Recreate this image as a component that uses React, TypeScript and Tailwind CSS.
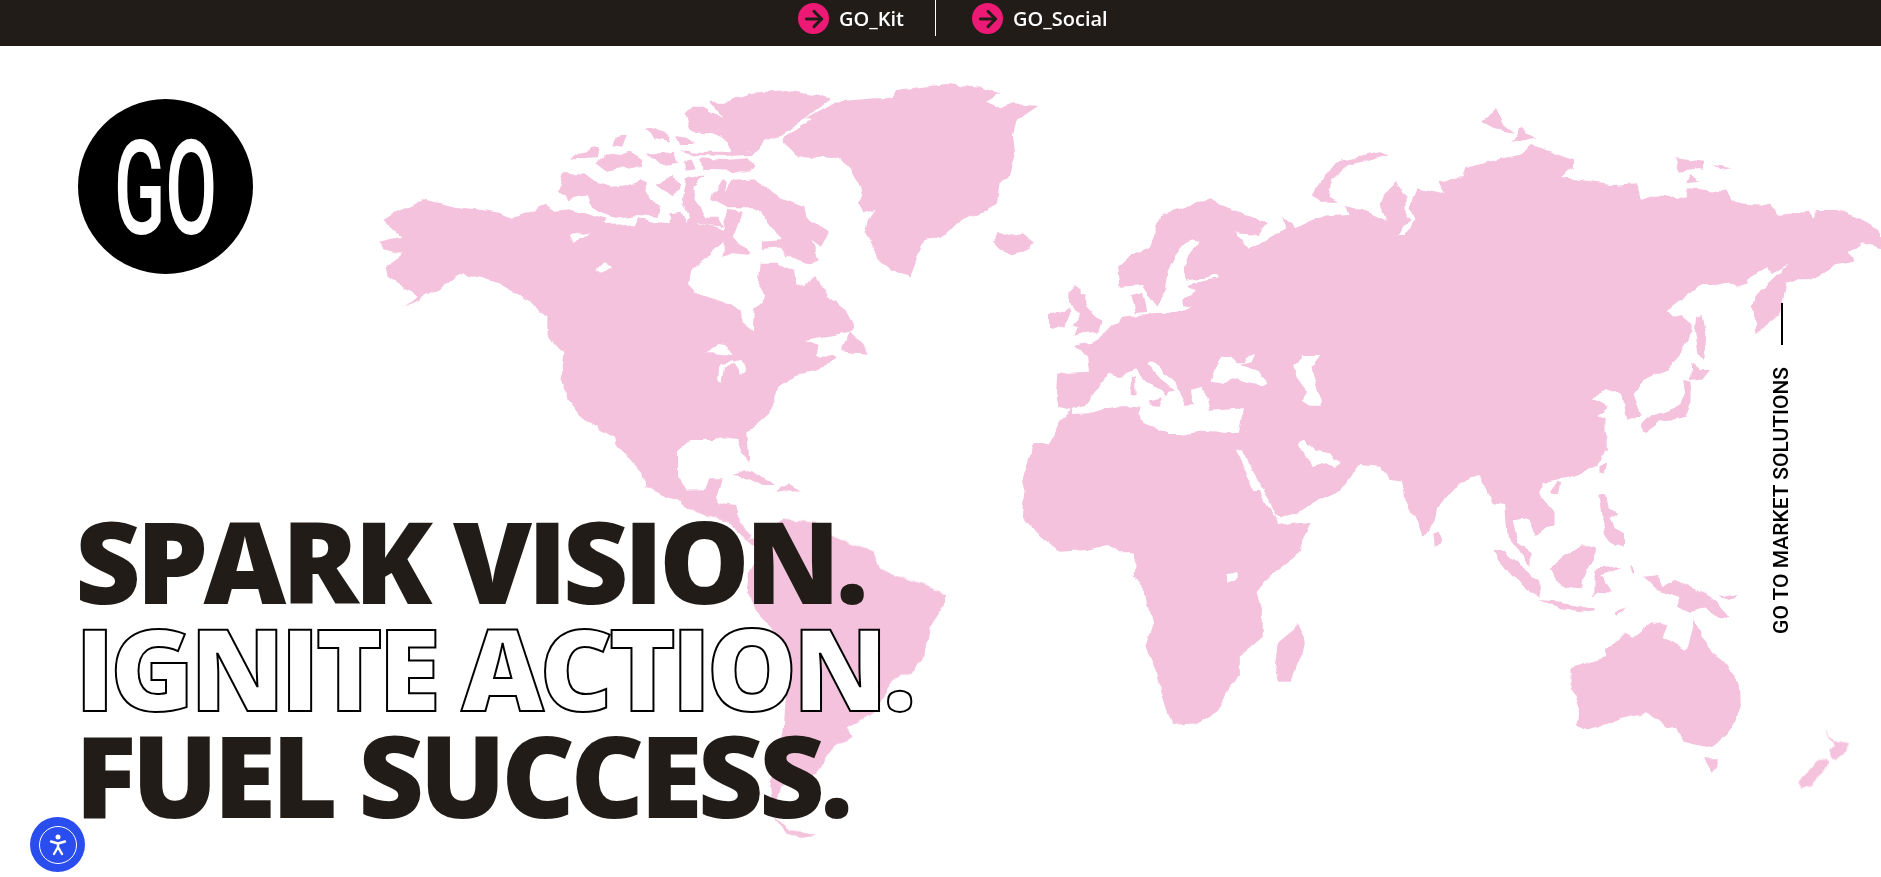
import { ArrowRight } from "lucide-react";

const PINK = "#f4c2dd";

// each group keeps the coordinates it was traced in
const NORTH = "translate(370 70) scale(0.4464 0.3333)";
const EURASIA = "translate(1000 90) scale(0.5618 0.3333)";
const SOUTH = "translate(1000 450) scale(0.5102 0.3333)";
const EUROPE = "translate(1040 250) scale(0.3333)";
const LATAM = "translate(640 480) scale(0.3333)";
const NZ = "translate(1780 710) scale(0.3333)";

const northLand = [
  "30,450 60,425 95,405 125,390 160,400 190,410 250,420 290,428 320,443 360,425 395,405 415,425 450,420 490,432 530,450 525,462 570,460 590,470 600,445 640,460 670,462 680,430 700,440 705,470 720,440 740,460 775,470 790,480 800,420 835,425 815,500 850,555 810,550 790,560 790,515 750,565 720,600 715,640 740,675 780,690 830,715 835,760 860,785 862,715 885,685 870,650 875,578 915,578 950,605 955,640 975,655 1000,618 1030,690 1065,720 1085,770 1075,785 975,810 1005,825 1000,855 1040,858 1045,870 990,905 950,915 915,950 895,1030 870,1060 845,1085 850,1175 835,1150 825,1110 790,1105 770,1110 720,1110 690,1140 690,1220 710,1265 750,1265 760,1225 790,1225 775,1300 825,1305 825,1350 795,1350 740,1310 700,1300 615,1250 610,1210 530,1090 480,1050 445,990 430,920 435,850 395,790 395,745 365,700 330,670 290,640 210,610 170,640 155,660 70,715 110,680 75,650 40,620 35,590 75,550 30,535 20,515 70,500",
  "765,380 790,325 800,330 795,360 810,330 860,325 895,355 920,385 970,410 975,440 1030,485 1010,530 990,510 1000,550 1005,575 980,580 930,560 920,535 880,540 880,515 920,510 905,480 880,440 870,415 800,415 765,390",
  "420,365 435,310 480,310 510,340 540,350 580,345 600,330 620,340 620,380 650,410 645,440 600,435 540,445 500,410 490,375 445,390",
  "640,345 680,315 695,345 680,380 660,365",
  "710,320 750,320 725,350 725,390 755,440 780,440 790,470 760,465 720,450 700,400",
  "670,430 700,425 715,470 680,465",
  "450,265 500,230 515,235 510,265 460,268",
  "540,225 560,195 575,195 565,230",
  "505,280 530,250 560,255 580,245 610,270 610,285 530,305",
  "615,180 640,175 670,200 670,215 640,205",
  "685,195 710,200 725,225 695,225",
  "620,250 650,250 680,245 690,285 660,290",
  "700,280 720,265 730,295 705,300",
  "740,265 790,270 850,265 860,290 850,305 770,300 745,300",
  "695,240 730,245 790,245 870,240 860,255 790,258 730,255",
  "705,130 720,110 745,110 790,145 760,95 800,95 850,70 930,60 1035,85 1000,115 950,170 920,200 880,215 870,240 810,245 800,215 770,195 730,190 710,165",
  "925,205 990,150 975,145 1040,95 1130,85 1170,85 1180,60 1290,42 1370,50 1415,70 1380,95 1410,115 1440,100 1500,105 1450,150 1440,190 1445,250 1430,320 1410,340 1405,400 1380,425 1320,455 1290,490 1240,515 1225,565 1210,622 1170,605 1140,570 1110,480 1130,420 1105,430 1095,400 1105,380 1095,340 1080,300 1055,263 990,263 960,260 925,215",
  "1392,510 1405,490 1430,500 1465,490 1490,515 1475,540 1440,555 1410,535",
  "1055,840 1075,785 1100,810 1115,855",
  "810,1215 840,1200 880,1220 910,1245 880,1245 850,1225",
  "910,1270 935,1242 965,1265 930,1265",
];

const northWater = [
  "445,495 470,490 490,495 465,505 455,520",
  "510,600 525,580 545,590 530,600 515,608",
  "750,850 780,825 800,830 810,855 770,850",
  "785,880 830,870 840,905 830,910 815,880 795,890 790,935 782,930",
  "530,1090 545,1100 575,1190 570,1205 530,1140",
  "350,730 362,720 372,765 355,760",
];

const eurasiaLand = [
  "210,530 230,500 265,470 285,375 330,350 375,325 400,350 440,375 475,405 460,435 420,430 445,480 470,450 490,430 510,415 500,385 520,395 525,415 570,380 620,375 615,345 660,370 688,392 675,340 705,275 722,320 722,380 730,395 705,435 720,435 738,390 728,350 742,295 790,315 780,270 825,265 830,235 880,210 925,195 945,165 1020,210 1020,235 995,260 1010,265 1020,270 1090,285 1130,280 1140,330 1160,320 1220,320 1225,295 1290,305 1310,340 1370,345 1385,375 1440,365 1445,385 1455,360 1490,360 1530,385 1568,420 1568,475 1536,460 1507,480 1522,515 1489,525 1453,565 1418,565 1400,575 1394,630 1385,670 1347,730 1338,650 1347,610 1406,520 1376,550 1364,535 1332,565 1332,580 1311,590 1293,575 1270,585 1246,585 1187,660 1198,680 1213,675 1231,700 1231,720 1213,790 1187,840 1145,870 1127,910 1142,975 1115,990 1106,920 1095,910 1080,900 1050,925 1086,950 1062,980 1080,1040 1080,1080 560,1080 560,700 300,640 280,650 255,585 215,590",
  "680,185 690,195 620,225 590,270 585,320 600,335 570,335 555,315 575,265 600,215",
  "885,60 895,100 915,125 880,115 858,95",
  "925,115 955,140 910,155",
  "1200,205 1255,215 1255,235 1210,245",
  "1270,225 1300,235 1280,240",
  "1225,255 1245,275 1220,280",
  "1239,680 1249,675 1258,760 1249,810 1243,790 1237,720",
  "1231,820 1246,840 1264,840 1252,865 1228,870",
  "1139,1005 1163,975 1187,965 1211,940 1219,900 1216,870 1231,875 1231,940 1222,980 1175,995 1148,1030",
];

const europeLand = [
  "250,200 340,190 430,180 600,100 960,100 960,640 900,720 0,720 0,597 30,580 45,545 60,510 95,480 55,470 48,430 52,370 150,365 145,320 105,285 150,275 180,262 215,225",
  "85,125 105,108 125,115 125,130 140,130 135,170 165,205 185,215 175,245 130,250 100,260 110,235 95,230 115,210 120,190 95,175 85,150",
  "30,195 85,172 92,185 75,225 30,238",
];

const europeWater = [
  "95,480 135,468 160,432 205,372 240,378 285,358 318,392 345,412 368,425 378,440 385,425 405,422 370,392 340,360 325,345 335,333 375,365 410,400 440,470 458,468 450,420 490,410 510,482 575,478 612,475 600,548 580,550 480,545 415,555 385,555 300,510 295,490 305,470 250,465 145,490 100,492",
  "515,395 525,350 545,320 575,322 590,340 612,340 615,320 645,312 635,335 600,345 650,360 685,395 670,405 620,395 585,385 555,402",
  "760,345 790,318 835,318 830,345 815,355 825,395 845,450 845,470 810,470 785,455 795,420 770,385",
  "775,578 795,572 830,605 875,615 885,630 905,640 890,650 860,640 820,650 800,625",
  "585,600 605,597 635,660 670,720 640,720 610,650",
];

const balticWater =
  "340,445 355,455 335,500 325,530 332,575 385,555 388,565 345,578 335,590 350,600 345,615 325,625 325,655 295,668 262,668 262,610 270,640 280,650 295,600 300,545 315,490";

const europeIslands = [
  "272,385 285,378 287,435 272,435",
  "325,455 365,445 360,470 335,468",
];

const southLand = [
  "65,-20 45,90 50,120 45,200 70,250 115,305 170,300 210,285 235,310 265,310 262,375 285,425 300,515 285,590 305,660 315,730 335,825 390,820 430,780 450,710 470,680 470,620 515,560 515,490 503,430 520,390 580,320 605,215 545,228 540,200 480,50 460,-20",
  "480,-100 480,0 510,90 540,190 548,205 590,185 625,150 660,125 685,75 650,35 640,45 610,45 605,20 590,0 650,30 665,40 745,50 765,90 790,95 795,150 830,260 850,215 855,175 905,95 940,75 965,160 990,165 995,260 1040,350 1040,310 1015,280 1005,210 1035,205 1050,255 1085,225 1085,185 1055,130 1065,100 1095,90 1130,75 1170,45 1185,0 1185,-100",
  "848,250 858,245 865,280 850,290",
  "545,575 585,525 598,560 590,620 570,695 545,695 538,655",
  "965,300 985,300 1060,400 1055,445 1030,420",
  "1055,450 1100,455 1165,475 1165,485 1100,475",
  "1080,350 1140,280 1165,295 1160,345 1145,375 1140,415 1110,410 1090,395",
  "1170,355 1215,348 1200,365 1175,375 1200,428 1170,425 1165,440 1165,390",
  "1175,135 1190,130 1195,175 1210,190 1195,205 1205,235 1225,250 1225,290 1205,290 1190,265 1180,190",
  "1205,490 1228,478 1210,500",
  "1262,380 1290,375 1300,405 1325,390 1370,420 1405,455 1430,505 1405,500 1380,475 1355,490 1325,470 1330,440 1285,415",
  "1410,440 1445,428 1430,450",
  "1235,345 1245,365 1240,378",
  "1118,655 1190,620 1190,600 1225,550 1240,560 1275,520 1310,525 1300,560 1345,600 1360,510 1395,610 1420,640 1450,700 1452,770 1425,860 1395,895 1340,875 1325,830 1305,835 1270,790 1220,805 1190,825 1150,838 1130,825 1135,780 1118,700",
  "1380,925 1408,925 1405,950 1395,968",
  "1175,45 1190,38 1185,75 1175,70",
  "1080,130 1090,95 1100,100 1095,135",
];

const latamLand = [
  "120,70 170,35 235,35 235,65 295,80 300,130 335,165 325,180 370,165 430,115 470,120 530,125 580,170 640,195 700,215 720,265 790,295 860,315 915,345 915,375 870,440 850,540 820,575 760,600 730,650 700,700 620,740 635,770 590,800 555,830 540,860 525,880 480,910 420,915 400,1010 450,1050 525,1060 490,1075 440,1060 405,1020 390,920 430,760 440,620 440,500 340,380 320,340 325,290 345,240 345,200 320,180 255,120 200,110",
];

const nzLand = [
  "135,55 165,90 205,100 190,125 170,155 145,125 165,105",
  "125,145 150,150 130,190 90,230 65,240 55,215 90,180",
];

function Shapes({ at, items, fill }: { at: string; items: string[]; fill: string }) {
  return (
    <g transform={at} fill={fill}>
      {items.map((p, i) => (
        <polygon key={i} points={p} />
      ))}
    </g>
  );
}

function WorldMap() {
  return (
    <svg className="absolute top-0 left-0" width="1881" height="877" viewBox="0 0 1881 877">
      {/* roughens the straight polygon edges into a coastline */}
      <filter id="coast" x="0" y="0" width="1881" height="877" filterUnits="userSpaceOnUse">
        <feTurbulence type="fractalNoise" baseFrequency="0.07" numOctaves="2" seed="4" result="noise" />
        <feDisplacementMap in="SourceGraphic" in2="noise" scale="7" xChannelSelector="R" yChannelSelector="G" />
      </filter>
      <g filter="url(#coast)">
        <Shapes at={EURASIA} items={eurasiaLand} fill={PINK} />
        <Shapes at={EUROPE} items={europeLand} fill={PINK} />
        <Shapes at={SOUTH} items={southLand} fill={PINK} />
        <Shapes at={NORTH} items={northLand} fill={PINK} />
        <Shapes at={LATAM} items={latamLand} fill={PINK} />
        <Shapes at={NZ} items={nzLand} fill={PINK} />
        <Shapes at={NORTH} items={northWater} fill="#fff" />
        <Shapes at={EUROPE} items={europeWater} fill="#fff" />
        <Shapes at={EURASIA} items={[balticWater]} fill="#fff" />
        <Shapes at={EUROPE} items={europeIslands} fill={PINK} />
        <Shapes at={EURASIA} items={["232,615 255,605 262,665 240,670"]} fill={PINK} />
        <Shapes at={SOUTH} items={["445,370 462,362 462,385 445,395"]} fill="#fff" />
      </g>
    </svg>
  );
}

function TopLink({ label, className }: { label: string; className: string }) {
  return (
    <a href="#" className={`flex items-center gap-[10px] ${className}`}>
      <span className="flex h-[31px] w-[31px] items-center justify-center rounded-full bg-[#ed1a75] text-[#211c18]">
        <ArrowRight size={26} strokeWidth={2.75} />
      </span>
      <span className="text-[20px] font-semibold leading-none text-white">{label}</span>
    </a>
  );
}

export default function App() {
  return (
    <div className="relative h-screen overflow-hidden bg-white font-['Open_Sans',sans-serif]">
      <header className="relative z-10 flex h-[46px] items-start bg-[#211c18] pt-[3px] pl-[798px]">
        <TopLink label="GO_Kit" className="pr-[31px]" />
        <div className="mt-[-3px] h-[36px] w-px bg-white" />
        <TopLink label="GO_Social" className="pl-[36px]" />
      </header>

      <div className="relative h-[831px]">
        <div className="absolute top-[-46px] left-0">
          <WorldMap />
        </div>

        <div className="relative flex h-full flex-col pl-[75px]">
          <div className="mt-[53px] ml-[3px] flex h-[175px] w-[175px] items-center justify-center rounded-full bg-black pt-[4px]">
            <span className="scale-x-[0.57] font-['Roboto',sans-serif] text-[132px] leading-none font-medium text-white">
              GO
            </span>
          </div>

          <h1 className="mt-[232px] text-[114px] leading-[107px] font-extrabold tracking-[-4.6px] text-[#211c18]">
            <div>SPARK VISION.</div>
            <div className="text-white [-webkit-text-stroke:2px_#000]">IGNITE ACTION.</div>
            <div>FUEL SUCCESS.</div>
          </h1>
        </div>

        <span className="absolute top-[321px] left-[1771px] rotate-180 font-['Roboto',sans-serif] text-[21px] leading-none font-medium text-black [writing-mode:vertical-rl]">
          GO TO MARKET SOLUTIONS
        </span>
        <div className="absolute top-[257px] left-[1781px] h-[42px] w-[1.5px] bg-black" />
      </div>

      <button className="absolute bottom-[5px] left-[30px] z-20 flex h-[55px] w-[55px] items-center justify-center rounded-full bg-[#2a4df0]">
        <span className="flex h-[38px] w-[38px] items-center justify-center rounded-full border border-white">
          <svg width="20" height="24" viewBox="0 0 20 24" fill="none">
            <circle cx="10" cy="4" r="2.5" fill="#fff" />
            <path d="M3 8.5 L10 10.5 L17 8.5 M10 10.5 V14 M10 14 L6 21 M10 14 L14 21" stroke="#fff" strokeWidth="2.4" strokeLinecap="round" strokeLinejoin="round" />
          </svg>
        </span>
      </button>
    </div>
  );
}
